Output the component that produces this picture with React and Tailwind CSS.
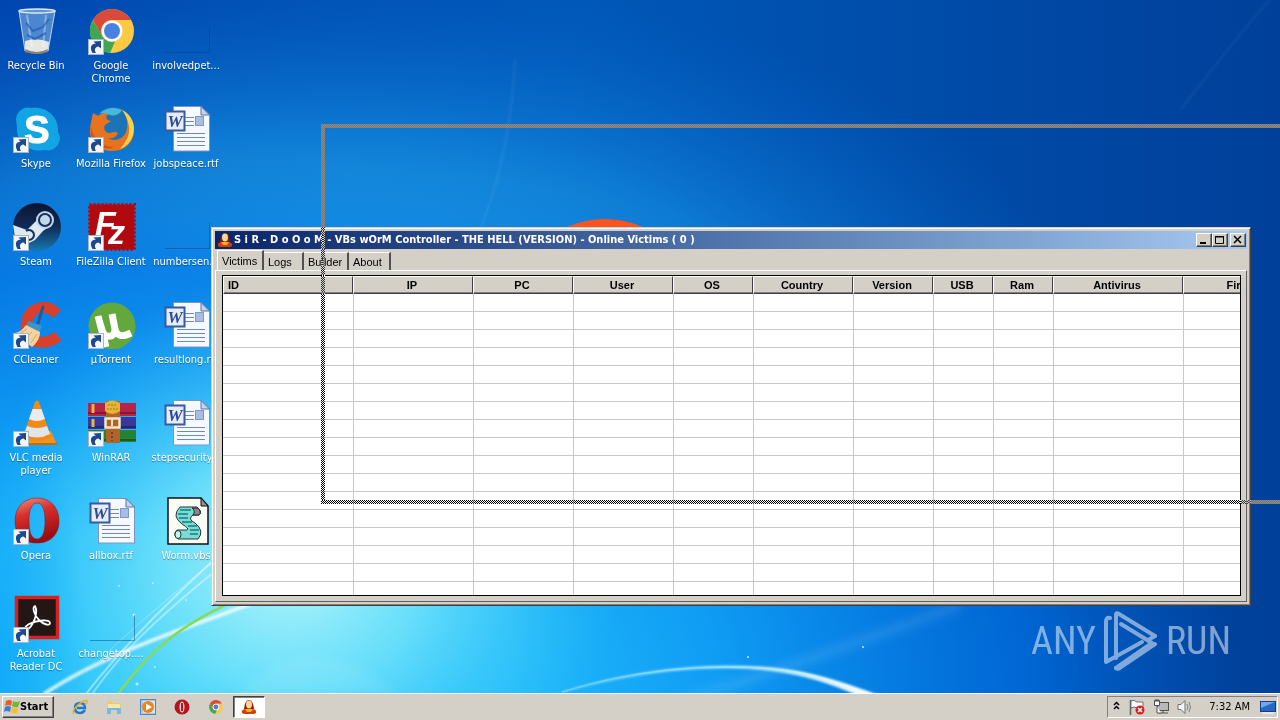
import React from "react";

const raised =
  "bg-[#d4d0c8] border border-t-white border-l-white border-b-[#404040] border-r-[#404040] shadow-[inset_-1px_-1px_0_#808080]";

function Wallpaper() {
  return (
    <svg className="absolute inset-0 h-full w-full" viewBox="0 0 1280 693" preserveAspectRatio="xMidYMid slice" aria-hidden="true">
      <defs>
        <linearGradient id="base" x1="0" y1="0" x2="1280" y2="0" gradientUnits="userSpaceOnUse">
          <stop offset="0" stopColor="#0046b0" />
          <stop offset="0.45" stopColor="#0058b8" />
          <stop offset="1" stopColor="#00409a" />
        </linearGradient>
        <radialGradient id="sky" gradientUnits="userSpaceOnUse" cx="0" cy="0" r="1" gradientTransform="translate(320 370) scale(780 400)">
          <stop offset="0" stopColor="#36bdf2" />
          <stop offset="0.3" stopColor="#22a6ea" />
          <stop offset="0.6" stopColor="#0f80d8" stopOpacity="0.85" />
          <stop offset="1" stopColor="#0660c4" stopOpacity="0" />
        </radialGradient>
        <radialGradient id="low" gradientUnits="userSpaceOnUse" cx="0" cy="0" r="1" gradientTransform="translate(200 680) scale(1040 520)">
          <stop offset="0" stopColor="#28c8fa" />
          <stop offset="0.3" stopColor="#20bafa" />
          <stop offset="0.5" stopColor="#0f9cf4" />
          <stop offset="0.8" stopColor="#0072e6" stopOpacity="0.7" />
          <stop offset="1" stopColor="#0064d4" stopOpacity="0" />
        </radialGradient>
        <radialGradient id="glow" gradientUnits="userSpaceOnUse" cx="0" cy="0" r="1" gradientTransform="translate(290 570) scale(330 290)">
          <stop offset="0" stopColor="#b4f6fa" />
          <stop offset="0.4" stopColor="#74e4fa" stopOpacity="0.85" />
          <stop offset="1" stopColor="#30c4fa" stopOpacity="0" />
        </radialGradient>
        <radialGradient id="edge" gradientUnits="userSpaceOnUse" cx="0" cy="0" r="1" gradientTransform="translate(0 660) scale(90 260)">
          <stop offset="0" stopColor="#0094f8" stopOpacity="0.5" />
          <stop offset="1" stopColor="#0094f8" stopOpacity="0" />
        </radialGradient>
        <linearGradient id="arc" x1="555" y1="0" x2="880" y2="0" gradientUnits="userSpaceOnUse">
          <stop offset="0" stopColor="#60ccff" />
          <stop offset="0.6" stopColor="#9fe0ff" />
          <stop offset="1" stopColor="#ffffff" />
        </linearGradient>
        <filter id="soft"><feGaussianBlur stdDeviation="1.2" /></filter>
        <filter id="wide"><feGaussianBlur stdDeviation="5" /></filter>
      </defs>
      <rect width="1280" height="693" fill="url(#base)" />
      <rect width="1280" height="693" fill="url(#sky)" />
      <rect width="1280" height="693" fill="url(#low)" />
      <rect width="1280" height="693" fill="url(#glow)" />
      <rect width="1280" height="693" fill="url(#edge)" />
      <circle cx="605" cy="312" r="93" fill="#f9541e" />
      <g fill="none" stroke="#fff">
        <path d="M44 694C110 650 200 624 260 600" strokeWidth="4" strokeOpacity="0.75" filter="url(#soft)" />
        <path d="M86 694C120 650 170 600 214 560" strokeWidth="2" strokeOpacity="0.45" />
        <path d="M92 694C130 640 180 600 214 572" strokeWidth="2" strokeOpacity="0.4" />
        <path d="M100 660C140 620 180 590 214 560" strokeWidth="1" strokeOpacity="0.3" />
        <path d="M118 694C150 650 180 624 245 596" stroke="#86dc58" strokeWidth="2.500" />
        <path d="M480 230C500 180 512 120 515 60" strokeOpacity="0.07" strokeWidth="2" filter="url(#soft)" />
        <path d="M680 700C780 672 860 640 960 606" strokeOpacity="0.12" strokeWidth="8" filter="url(#wide)" />
        <path d="M1180 110C1220 60 1250 20 1270 0" strokeOpacity="0.06" strokeWidth="2" filter="url(#soft)" />
      </g>
      <path d="M240 694C280 650 330 640 400 694Z" fill="#fff" fillOpacity="0.08" filter="url(#wide)" />
      <path d="M562 692C640 668 700 666 730 666C790 666 820 674 880 696L860 696C815 676 780 669 730 668C690 668 640 671 562 692Z" fill="url(#arc)" stroke="url(#arc)" strokeWidth="1" filter="url(#soft)" />
      <path d="M562 692C640 668 700 667 730 667C790 667 820 675 870 695" fill="none" stroke="url(#arc)" strokeWidth="1.500" />
      <g fill="#bdf2ff">
        <circle cx="119" cy="586" r="1" /><circle cx="153" cy="583" r="1" /><circle cx="137" cy="684" r="1.5" />
        <circle cx="748" cy="657" r="1" /><circle cx="863" cy="647" r="1" /><circle cx="134" cy="615" r="1.5" />
        <circle cx="155" cy="667" r="1" /><circle cx="186" cy="600" r="1" />
      </g>
    </svg>
  );
}

function Shortcut() {
  return (
    <g>
      <rect x="0.5" y="32.5" width="15" height="15" fill="#f4f6fa" stroke="#a9b4c4" />
      <path d="M4.500 46C1 40 4 36 8 37L5.500 34.500L13 34L13 41.500L10.500 39.500C7 40 6 43 8 46Z" fill="#1c4a8c" />
    </g>
  );
}

const Bin = () => (
  <>
    <path d="M6 4L12 44Q24 49 35 44L42 4Z" fill="#a8d0f0" fillOpacity="0.45" />
    <path d="M12 34Q24 30 36 35L35 44Q24 49 12 44Z" fill="#e6e6e2" />
    <path d="M12 42Q24 48 35 42L35 45Q24 49 12 45Z" fill="#8a8270" />
    <path d="M14 8L19 40M33 8L30 40" stroke="#fff" strokeOpacity="0.35" strokeWidth="2" />
    <path d="M13 16L20 24L30 20L36 12M14 28L22 32L33 26" stroke="#1e5cb4" strokeWidth="2" fill="none" strokeOpacity="0.7" />
    <path d="M6 4L12 44M42 4L35 44" stroke="#dfeefa" strokeOpacity="0.8" />
    <ellipse cx="24" cy="4" rx="18" ry="2" fill="#5f94d4" stroke="#e0e6ea" strokeWidth="1.5" />
  </>
);

const ChromeLogo = () => (
  <>
    <circle cx="24" cy="24" r="22" fill="#fcc944" />
    <path d="M4.900 13A22 22 0 0 1 43 13L24 13A11 11 0 0 0 14.500 29.500Z" fill="#d94a3c" />
    <path d="M4.900 13L14.500 29.500A11 11 0 0 0 27 34.500L22 46A22 22 0 0 1 4.900 13Z" fill="#3fa654" />
    <circle cx="24" cy="24" r="10.500" fill="#fff" />
    <circle cx="24" cy="24" r="8" fill="#4a80e0" />
  </>
);

const Skype = () => (
  <>
    <path d="M3 14A12 12 0 0 1 18 3C34 1 46 12 45 27A12 12 0 0 1 32 45C16 48 3 38 4 22Z" fill="#12a5e4" />
    <text x="24" y="38" textAnchor="middle" fill="#fff" stroke="#fff" className="font-['Liberation_Sans'] text-[38px] font-bold">S</text>
  </>
);

const Firefox = () => (
  <>
    <circle cx="25" cy="22" r="20" fill="#1c74b8" />
    <path d="M12 8Q22 0 34 5Q30 12 22 10Z" fill="#49b8dc" />
    <path d="M34 5C42 9 47 18 46 28C44 40 35 46 24 46C12 46 2 38 2 26C2 19 4 14 5 8L10 11C13 8 17 8 20 9C17 12 18 15 23 16L17 20C15 23 17 28 21 28C24 28 26 25 30 28C28 33 23 34 20 33C28 38 38 33 39 23C40 16 38 10 34 5Z" fill="#e8731c" />
    <path d="M34 5C44 10 48 20 45 30C43 37 38 42 32 44C38 37 42 30 41 22C40 15 38 10 34 5Z" fill="#fbd04a" />
    <path d="M3 22C5 34 14 42 26 42C18 46 6 40 3 30Z" fill="#d4501c" />
  </>
);

const WordDoc = () => (
  <>
    <path d="M10.500 1.500H38L46.500 10V46H10.500Z" fill="#f6f9ff" stroke="#7c94c4" />
    <path d="M38 1.500V10H46.500Z" fill="#c4d4ee" stroke="#5a74ac" />
    <path d="M22 12.500H31M22 16.500H31M22 20.500H31M14 28.500H42M14 32.500H42M14 36.500H42M14 40.500H42" stroke="#6c88c8" />
    <rect x="32.500" y="11.500" width="8" height="9" fill="#a8bce4" stroke="#7c98d0" />
    <rect x="2.500" y="6.500" width="19" height="19" fill="#e6edf9" stroke="#3858a0" strokeWidth="2" />
    <text x="12" y="22" textAnchor="middle" fill="#2c4a94" className="font-['Liberation_Serif'] text-[17px] font-bold italic">W</text>
  </>
);

const Thumb = () => <path d="M2 45.500H46.500V20" fill="none" stroke="#063c78" strokeOpacity="0.45" />;

const Steam = () => (
  <>
    <defs>
      <linearGradient id="steam" x1="0" y1="0" x2="0" y2="1">
        <stop offset="0" stopColor="#0c1430" /><stop offset="0.5" stopColor="#102c58" /><stop offset="1" stopColor="#1878b0" />
      </linearGradient>
    </defs>
    <circle cx="24" cy="24" r="24" fill="url(#steam)" />
    <path d="M0 22L14 27L24 17L40 21L30 28L22 37L16 40L2 34Z" fill="#dce8f4" />
    <circle cx="32" cy="17" r="9" fill="#c4d8ec" />
    <circle cx="32" cy="17" r="6" fill="#c4d8ec" stroke="#14305c" strokeWidth="2" />
    <path d="M13 28A5 5 0 1 1 16 37" fill="none" stroke="#14305c" strokeWidth="2" />
  </>
);

const FileZilla = () => (
  <>
    <rect x="1.500" y="1.500" width="45" height="45" fill="#b00a0e" stroke="#b00a0e" strokeWidth="3" strokeDasharray="2 2" />
    <text x="7" y="32" fill="#fff" className="font-['Liberation_Sans'] text-[34px] font-bold italic">
      F<tspan x="20" y="41">z</tspan>
    </text>
  </>
);

const CCleaner = () => (
  <>
    <path d="M44 13C34 2 20 6 15 16C10 30 16 41 27 41C35 42 40 39 45 35" fill="none" stroke="#d8402c" strokeWidth="11" />
    <path d="M30 6L25 22" stroke="#1c5c98" strokeWidth="3" strokeLinecap="round" />
    <path d="M15 20L29 25L26 32L13 25Z" fill="#3c94c8" />
    <path d="M13 24L27 31C27 37 24 42 19 46L2 32C7 31 10 28 13 24Z" fill="#f6d29c" />
    <path d="M6 33L14 28M12 38L19 31M18 42L24 33" stroke="#d8a464" />
  </>
);

const UTorrent = () => (
  <>
    <circle cx="24" cy="25" r="23.500" fill="#62a83c" />
    <path d="M10 15L18 46M11 19L14 29C17 38 27 37 27 28L24 13M27 28C29 36 35 36 43 32" fill="none" stroke="#fff" strokeWidth="7" />
  </>
);

const Vlc = () => (
  <>
    <path d="M10 32H38L44 46H4Z" fill="#f0941c" />
    <path d="M22 3Q24 0 26 3L38 38Q24 46 10 38Z" fill="#f48a14" />
    <path d="M19.500 10H28.500L32 20Q24 24 16 20Z" fill="#e8ecf0" />
    <path d="M14 27Q24 31 34 27L37 35Q24 42 11 35Z" fill="#e0e6ea" />
    <path d="M4 45H44" stroke="#c46c0c" strokeWidth="2" />
  </>
);

const WinRar = () => (
  <>
    <rect y="4" width="48" height="13" fill="#b82448" />
    <rect y="18" width="48" height="12" fill="#38389c" />
    <rect y="31" width="48" height="12" fill="#248434" />
    <path d="M0 14H48M0 28H48M0 41H48" stroke="#000" strokeOpacity="0.3" strokeWidth="2" />
    <path d="M5 5V14M5 20V28" stroke="#e8b83c" strokeWidth="3" />
    <rect x="18" y="2" width="14" height="42" fill="#b0642c" />
    <path d="M17 4Q24 -1 32 4V12Q24 18 17 12Z" fill="#e8b434" />
    <path d="M20 6H29M19 10H30" stroke="#a87818" strokeDasharray="2 1" />
    <rect x="17.500" y="19.500" width="14" height="9" fill="none" stroke="#f0e8cc" strokeWidth="2.500" />
    <path d="M24 20V27" stroke="#f4e4b0" strokeWidth="2" />
    <path d="M24 33V42" stroke="#7c4018" strokeDasharray="2 2" strokeWidth="2" />
  </>
);

const Opera = () => (
  <>
    <defs>
      <linearGradient id="opera" x1="0" y1="0" x2="0.300" y2="1">
        <stop offset="0" stopColor="#f09080" /><stop offset="0.4" stopColor="#d8302c" /><stop offset="1" stopColor="#9c0c10" />
      </linearGradient>
    </defs>
    <path fillRule="evenodd" d="M24 1C37 1 46 10 46 24C46 38 37 46 24 46C11 46 2 38 2 24C2 10 11 1 24 1ZM24 6C18 6 16 14 16 24C16 34 18 42 24 42C30 42 32 34 32 24C32 14 30 6 24 6Z" fill="url(#opera)" stroke="#8c1014" strokeWidth="0.500" />
  </>
);

const Vbs = () => (
  <>
    <path d="M5 1H38L45 9V47H5Z" fill="#fbfbf4" stroke="#111" strokeWidth="1.500" />
    <path d="M38 1V9H45Z" fill="#909090" stroke="#111" />
    <path d="M17 10L34 10Q40 15 36 18L30 18Q24 22 32 26Q42 34 35 42L15 42Q9 38 14 33H24Q27 32 19 27Q8 19 17 10Z" fill="#7cdcd4" stroke="#183c3c" />
    <path d="M17 13H28M15 17H25M16 21H25M19 25H29M25 29H34M27 33H36M27 37H35" stroke="#147c80" strokeWidth="1.500" />
    <path d="M29 11H35Q39 15 36 18H30Q33 14 29 11Z" fill="#888" stroke="#222" />
    <ellipse cx="15" cy="37.500" rx="3" ry="4" fill="#c8f4f0" stroke="#183c3c" />
  </>
);

const Acrobat = () => (
  <>
    <rect x="3.500" y="2.500" width="41" height="40" fill="#251616" stroke="#d8201c" strokeWidth="3.500" />
    <path d="M14 35C19 32 26 19 22 11C19 12 21 20 26 25C31 30 37 31 37 28C37 24 25 25 16 29C11 32 11 36 14 35Z" fill="none" stroke="#fff" strokeWidth="1.800" />
  </>
);

const icons = [
  [Bin, "Recycle Bin", false], [Skype, "Skype", true], [Steam, "Steam", true], [CCleaner, "CCleaner", true],
  [Vlc, "VLC media player", true], [Opera, "Opera", true], [Acrobat, "Acrobat Reader DC", true],
  [ChromeLogo, "Google Chrome", true], [Firefox, "Mozilla Firefox", true], [FileZilla, "FileZilla Client", true],
  [UTorrent, "µTorrent", true], [WinRar, "WinRAR", true], [WordDoc, "allbox.rtf", false], [Thumb, "changetop....", false],
  [Thumb, "involvedpet...", false], [WordDoc, "jobspeace.rtf", false], [Thumb, "numbersen...", false],
  [WordDoc, "resultlong.rtf", false], [WordDoc, "stepsecurity...", false], [Vbs, "Worm.vbs", false],
];

function DesktopIcon({ Art, label, linked }) {
  const wraps = label === "Google Chrome" || label.startsWith("VLC") || label.startsWith("Acrobat");
  return (
    <button type="button" className="flex flex-col items-center gap-1">
      <svg viewBox="0 0 48 48" className="size-12 shrink-0" aria-hidden="true">
        <Art />
        {linked && <Shortcut />}
      </svg>
      <span className={`pr-[2px] text-[11px] leading-[13px] text-white [text-shadow:0_1px_1px_#0006] ${wraps ? "w-16" : "whitespace-nowrap"}`}>{label}</span>
    </button>
  );
}

function Doom({ className }) {
  return (
    <svg viewBox="0 0 16 16" className={className} aria-hidden="true">
      <path d="M1 14Q0 11 4 10L12 10Q16 11 15 14L13 15H3Z" fill="#d83c08" />
      <path d="M3 10Q4 1 8 1Q12 1 13 10Z" fill="#8c1c08" />
      <ellipse cx="8" cy="5.500" rx="3" ry="4" fill="#fcd898" />
      <path d="M4 10H12L10 13H6Z" fill="#fcb020" />
    </svg>
  );
}

const columns = [
  ["ID", "w-[130px]"], ["IP", "w-[120px]"], ["PC", "w-[100px]"], ["User", "w-[100px]"], ["OS", "w-[80px]"],
  ["Country", "w-[100px]"], ["Version", "w-[80px]"], ["USB", "w-[60px]"], ["Ram", "w-[60px]"],
  ["Antivirus", "w-[130px]"], ["Firewall", "w-[130px]"],
];

function VictimTable() {
  return (
    <div className="min-h-0 flex-1 overflow-hidden border border-black bg-white">
      <table className="w-[1090px] table-fixed border-separate border-spacing-0">
        <thead>
          <tr>
            {columns.map(([name, width], i) => (
              <th
                key={name}
                scope="col"
                className={`h-[18px] border-t border-r border-b border-l border-t-white border-r-[#404040] border-b-[#404040] border-l-white bg-[#d4d0c8] p-0 text-[11px] leading-4 font-bold shadow-[inset_0_-1px_0_#808080] ${width} ${i === 0 ? "pl-1 text-left" : "pr-[2px] text-center"}`}
              >
                {name}
              </th>
            ))}
          </tr>
        </thead>
        <tbody>
          {Array.from({ length: 17 }, (_, r) => (
            <tr key={r}>
              {columns.map(([name], i) => (
                <td key={name} className={`h-[18px] border-b border-[#c8c8c8] p-0 ${i === 0 ? "" : "border-l"}`} />
              ))}
            </tr>
          ))}
        </tbody>
      </table>
    </div>
  );
}

function WindowButton({ label, children }) {
  return (
    <button type="button" aria-label={label} className={`flex h-[14px] w-4 items-center justify-center ${raised}`}>
      <svg viewBox="0 0 12 10" className="h-[10px] w-3" fill="none" stroke="#000" aria-hidden="true">{children}</svg>
    </button>
  );
}

function Tab({ label, selected, width }) {
  return (
    <button
      type="button"
      role="tab"
      aria-selected={!!selected}
      className={`border-t border-r-2 border-t-white border-r-[#505050] pl-1 text-left text-[11px] leading-4 ${width} ${selected ? "h-5 border-l border-l-white" : "h-[18px]"}`}
    >
      {label}
    </button>
  );
}

const invert = "bg-[repeating-conic-gradient(#fff_0_25%,#000_0_50%)] bg-[length:2px_2px] mix-blend-difference";
const stipple = "bg-[repeating-conic-gradient(#968678_0_25%,#727a84_0_50%)] bg-[length:2px_2px]";

function ControllerWindow() {
  return (
    <section className="absolute top-[227px] left-[211px] flex h-[379px] w-[1040px] flex-col border border-t-[#d4d0c8] border-r-[#404040] border-b-[#404040] border-l-[#d4d0c8] bg-[#d4d0c8] p-[3px] shadow-[inset_1px_1px_0_#fff,inset_-1px_-1px_0_#808080] font-['Liberation_Sans',Arial,sans-serif]">
      <header className="flex h-[18px] shrink-0 items-center bg-linear-to-r from-[#0a246a] to-[#a6caf0] pr-px pl-[2px]">
        <Doom className="size-4" />
        <h1 className="flex-1 pl-px text-[11px] font-bold whitespace-nowrap text-white font-['DejaVu_Sans_Condensed','Noto_Sans',sans-serif]">
          S i R - D o O o M - VBs wOrM Controller - THE HELL (VERSION) - Online Victims ( 0 )
        </h1>
        <WindowButton label="Minimize"><path d="M2 8H8" strokeWidth="2" /></WindowButton>
        <WindowButton label="Maximize"><path d="M1.500 1.500H9.500V8.500H1.500ZM1 2H10" /></WindowButton>
        <div className="pl-[2px]"><WindowButton label="Close"><path d="M2 1L9 8M9 1L2 8" strokeWidth="1.500" /></WindowButton></div>
      </header>
      <div role="tablist" className="mt-[2px] flex h-[19px] shrink-0 items-end pl-[2px]">
        <Tab label="Victims" selected width="w-[47px]" />
        <Tab label="Logs" width="w-10" />
        <Tab label="Builder" width="w-[45px]" />
        <Tab label="About" width="w-[42px]" />
      </div>
      <div className="flex min-h-0 flex-1 flex-col border border-t-white border-r-[#606060] border-b-[#606060] border-l-white pt-1 pr-[5px] pb-[5px] pl-[6px]">
        <VictimTable />
      </div>
      <div className="pointer-events-none absolute -top-px -right-px left-[109px] flex h-[277px] flex-col">
        <div className={`w-1 flex-1 ${invert}`} />
        <div className={`h-1 ${invert}`} />
      </div>
    </section>
  );
}

function DragOutline() {
  return (
    <div className="pointer-events-none absolute top-[124px] right-0 left-[321px] flex h-[380px] flex-col">
      <div className={`h-1 ${stipple}`} />
      <div className={`w-1 flex-1 ${stipple}`} />
      <div className={`h-1 ${stipple}`} />
    </div>
  );
}

function Watermark() {
  return (
    <div className="absolute right-[49px] bottom-[21px] flex items-center gap-2 text-[38px] leading-none text-white opacity-50 font-['Roboto_Condensed','Roboto',sans-serif]">
      <span>ANY</span>
      <svg viewBox="0 0 54 62" className="h-[62px] w-[54px]" fill="none" stroke="#fff" strokeWidth="4" strokeLinejoin="round" strokeLinecap="round" aria-hidden="true">
        <path d="M6 8Q2 7 2 12V52L38 32" />
        <path d="M17 14L48 33L12 58" />
        <path d="M12 48V5Q12 2 15 4L51 26" />
        <path d="M51 26L44 30M12 58Q14 60 17 57L51 34" />
      </svg>
      <span>RUN</span>
    </div>
  );
}

function QuickLaunch({ label, children }) {
  return (
    <button type="button" aria-label={label}>
      <svg viewBox="0 0 16 16" className="size-4" aria-hidden="true">{children}</svg>
    </button>
  );
}

function Taskbar() {
  return (
    <footer className="relative flex h-[27px] shrink-0 items-center border-t border-white bg-[#d4d0c8] pr-[2px] pl-[2px]">
      <button type="button" className={`flex h-[22px] w-[52px] items-center pl-px text-[11px] font-bold ${raised}`}>
        <svg viewBox="0 0 16 16" className="size-4 shrink-0" aria-hidden="true">
          <path d="M2 2Q5 0 8 2L7 7Q4 5 1 7Z" fill="#e85c24" />
          <path d="M9 2Q12 4 16 2L14 8Q11 9 8 7Z" fill="#78b434" />
          <path d="M1 8Q4 6 7 8L6 13Q3 11 0 13Z" fill="#3c7cd8" />
          <path d="M8 8Q11 10 14 9L13 14Q10 15 7 13Z" fill="#f4c024" />
        </svg>
        Start
      </button>
      <nav className="ml-[18px] flex gap-[18px]">
        <QuickLaunch label="Internet Explorer">
          <path d="M13 11Q11 14 8 14Q3 14 3 9Q3 4 8 4Q13 4 13 9H5" fill="none" stroke="#1c7cd0" strokeWidth="2.500" />
          <path d="M2 15Q-1 12 7 5Q14 0 15 2Q16 3 13 6" fill="none" stroke="#e8b020" strokeWidth="1.500" />
        </QuickLaunch>
        <QuickLaunch label="Windows Explorer">
          <path d="M1 2H6L8 4H15V9H1Z" fill="#e8cc74" />
          <path d="M2 5H14V11H2Z" fill="#f8e8a4" />
          <path d="M1 9H15V15H11V11H5V15H1Z" fill="#78b8e4" />
        </QuickLaunch>
        <QuickLaunch label="Media Player">
          <rect x="0.500" y="0.500" width="15" height="15" fill="#a4ccf0" stroke="#4888c8" />
          <rect x="3" y="2" width="12" height="12" fill="#d4e4f4" />
          <circle cx="8" cy="8" r="6" fill="#f08418" />
          <path d="M6 4.500L12 8L6 11.500Z" fill="#fff" />
        </QuickLaunch>
        <QuickLaunch label="Opera">
          <ellipse cx="8" cy="8" rx="7.500" ry="7.500" fill="#b81420" />
          <ellipse cx="8" cy="8" rx="2.500" ry="5.500" fill="#e8d8d4" />
          <path d="M8 4V12" stroke="#b81420" strokeWidth="2" />
        </QuickLaunch>
        <QuickLaunch label="Google Chrome"><g transform="translate(0.500 0.500) scale(0.310)"><ChromeLogo /></g></QuickLaunch>
      </nav>
      <button type="button" aria-label="S i R - D o O o M" className="ml-[9px] flex h-[22px] w-8 items-center justify-center border border-t-[#404040] border-r-white border-b-white border-l-[#404040] bg-white shadow-[inset_1px_1px_0_#808080]">
        <Doom className="size-4" />
      </button>
      <div className="ml-auto flex h-[22px] items-center border border-t-[#808080] border-r-white border-b-white border-l-[#808080] pr-px pl-[5px] text-[11px]">
        <svg viewBox="0 0 8 12" className="mr-2 h-3 w-2" fill="none" stroke="#000" strokeWidth="1.500" aria-hidden="true">
          <path d="M1 4L3.500 1.500L6 4M1 8L3.500 5.500L6 8" />
        </svg>
        <svg viewBox="0 0 64 16" className="h-4 w-16" aria-hidden="true">
          <path d="M1.500 1V16" stroke="#606060" strokeWidth="1.500" />
          <path d="M2 2Q5 0 8 3H14V9H8Q5 7 2 9Z" fill="#fff" stroke="#707070" />
          <circle cx="11" cy="11" r="4.500" fill="#d82020" />
          <path d="M9 9L13 13M13 9L9 13" stroke="#fff" strokeWidth="1.500" />
          <rect x="28.500" y="3.500" width="11" height="8" fill="#b8b8b8" stroke="#505050" />
          <path d="M30 14H39M34 12V14" stroke="#505050" />
          <path d="M25.500 1.500H30.500V6.500H25.500ZM27 0V3M29 0V3M28 7V14H32" fill="#fff" stroke="#505050" />
          <path d="M49 5.500H52L56 1.500V14.500L52 10.500H49Z" fill="#f4f4f4" stroke="#707070" />
          <path d="M58 5Q60 8 58 11M60 3Q63 8 60 13" fill="none" stroke="#808080" />
        </svg>
        <time className="pr-[10px] pl-4">7:32 AM</time>
        <svg viewBox="0 0 16 16" className="size-4" aria-hidden="true">
          <rect x="0.500" y="2.500" width="15" height="10" fill="#2468c8" stroke="#183c7c" />
          <path d="M1 3H15Q10 5 1 9Z" fill="#70a8ec" />
          <path d="M2 14H14" stroke="#e8e8e8" strokeWidth="2" />
        </svg>
      </div>
    </footer>
  );
}

export default function App() {
  return (
    <div className="flex h-screen flex-col overflow-hidden bg-[#0050b4] font-['DejaVu_Sans_Condensed','Noto_Sans',sans-serif] text-black">
      <main className="relative min-h-0 flex-1">
        <Wallpaper />
        <div className="relative grid w-max auto-cols-[74px] grid-flow-col grid-rows-[repeat(7,98px)] gap-x-px pt-[7px]">
          {icons.map(([Art, label, linked]) => (
            <DesktopIcon key={label} Art={Art} label={label} linked={linked} />
          ))}
        </div>
        <Watermark />
        <DragOutline />
        <ControllerWindow />
      </main>
      <Taskbar />
    </div>
  );
}
